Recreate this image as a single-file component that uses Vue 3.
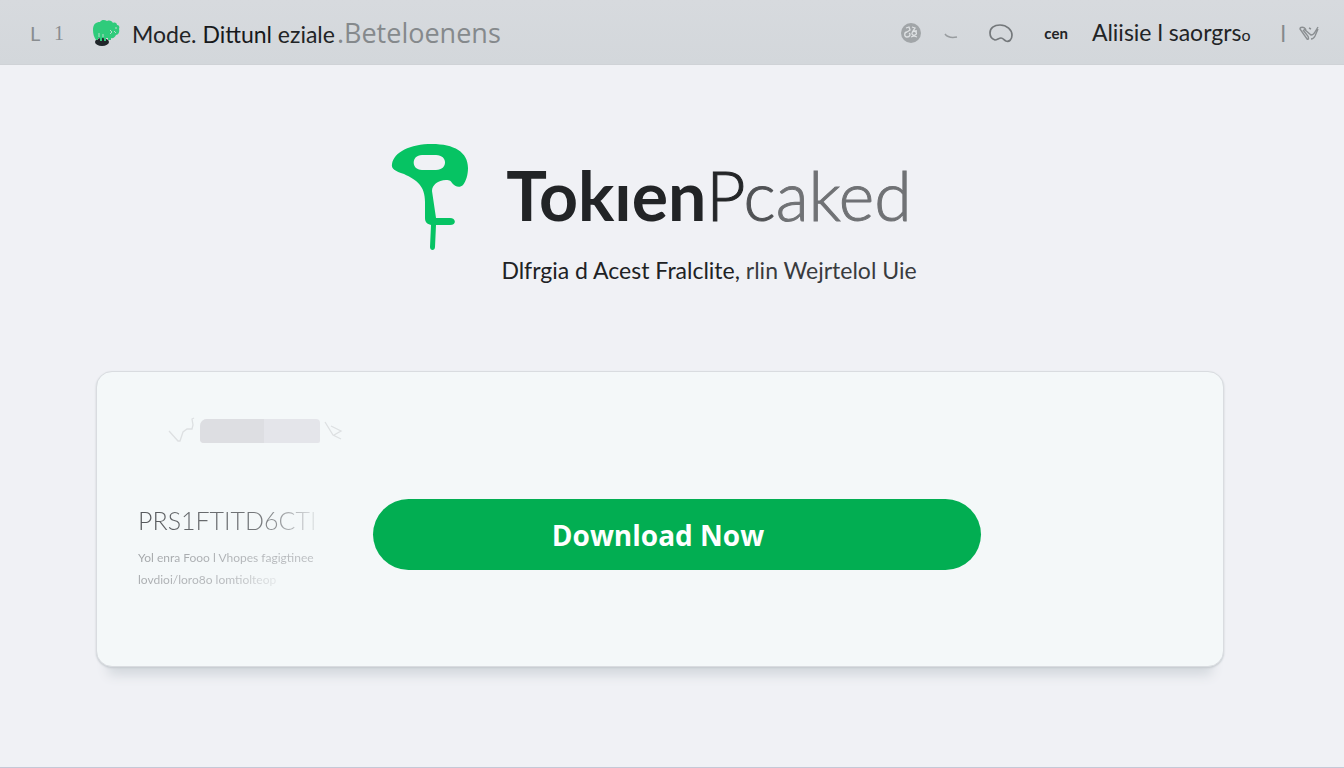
<script setup>
</script>

<template>
  <div class="page">
    <header class="topbar">
      <nav class="primary" aria-label="Primary">
        <a class="mark" href="#">L</a>
        <a class="mark serif" href="#">1</a>
        <a class="brand" href="#">
          <svg class="brand-icon" viewBox="0 0 30 30" aria-hidden="true">
            <ellipse cx="10" cy="24" rx="7" ry="4" fill="#20262a" />
            <path d="M1 12C1 6 4 4 8 4c2-3 5-2 7-1 3-1 5 0 6 2 2-1 4 0 4 2 2 0 3 2 2 4 1 3-1 6-3 6-1 2-3 4-5 3v2h-3v-2h-2v3h-2v-3h-2v3H8v-3H6v2H4c-2-3-3-6-3-10z" fill="#2fcb7b" />
            <path d="M18 12l2 2-2 2m4-3l2 2m-1-5h2M7 15v4m4-3v3" fill="none" stroke="#b8dccb" stroke-width="1" />
          </svg>
          <span class="brand-text">Mode. <span class="strong">Dittunl</span> eziale<span class="soft">.Beteloenens</span></span>
        </a>
      </nav>
      <nav class="secondary" aria-label="Account">
        <span class="tools">
          <button class="icon-button" type="button" aria-label="Status">
            <svg width="22" height="22" viewBox="0 0 22 22">
              <circle cx="11" cy="11" r="10" fill="#a1a5a8" />
              <path d="M6 6l3-1 1 3-3 2M7 10c-3 0-3 5 0 5s4-3 2-4M12 5l3 1-2 3 4 0M12 10c4-2 6 2 3 3s-4-2-2-3m-2 5l3-1 3 1" fill="none" stroke="#dfe2e4" stroke-width="1.3" />
            </svg>
          </button>
          <button class="icon-button" type="button" aria-label="Expand">
            <svg width="14" height="22" viewBox="0 0 14 22">
              <path d="M1 12c3 4 7 4 12 3" fill="none" stroke="#989c9f" stroke-width="1.5" />
            </svg>
          </button>
        </span>
        <button class="icon-button" type="button" aria-label="Messages">
          <svg width="26" height="22" viewBox="0 0 26 22">
            <path d="M7 18C4 17 2 14 2 11c0-5 4-8 10-8 7 0 12 5 12 10 0 5-3 7-6 6-2-1-3-3-5-3-2 0-4 2-6 2z" fill="none" stroke="#74787b" stroke-width="1.7" />
          </svg>
        </button>
        <span class="user">
          <a class="lang" href="#">cen</a>
          <a class="account" href="#">Aliisie l saorgrs<span class="tail">o</span></a>
        </span>
        <span class="more">
          <span class="divider">l</span>
          <button class="icon-button" type="button" aria-label="More">
            <svg width="22" height="22" viewBox="0 0 22 22">
              <path d="M8 8C6 4 2 5 2 7l7 10c2 1 2-2 0-4L5 8M6 7l7 6c2 0 3-1 4-3l3-5M13 17c2 0 3-1 4-3l3-7M11 6l2 1" fill="none" stroke="#8b8f92" stroke-width="1.4" />
            </svg>
          </button>
        </span>
      </nav>
    </header>

    <main>
      <section class="hero">
        <svg class="logo" viewBox="0 0 78 108" aria-hidden="true">
          <path fill="#06c363" fill-rule="evenodd" d="M1 21C3 9 19 1 41 1c22 0 36 8 36 24 0 7-2 13-5 17-3 3-8 2-11-2-1-2-2-3-6-3-8 0-14 5-14 11l4 27h14c6 0 7 7 0 7H45l-1 22c0 4-5 4-5 0l1-22c-4-1-6-3-6-7V59C34 43 26 37 13 31 4 28 0 26 1 21zM31 12c-11 0-11 15 0 15h14c12 0 12-15 0-15z" />
        </svg>
        <div class="hero-copy">
          <h1>Tokıen<span class="thin"><span class="dark">P</span><span class="mid">c</span>aked</span></h1>
          <p><span class="ink">Dlfrgia d Acest Fralclite,</span> rlin Wejrtelol Uie</p>
        </div>
      </section>

      <section class="card">
        <div class="meter">
          <svg width="28" height="28" viewBox="0 0 28 28" aria-hidden="true">
            <path d="M1 14l9 10h2l3-9 4-3h5l1-4-1-6 2-1" fill="none" stroke="#dde0e2" stroke-width="1.3" />
          </svg>
          <div class="bar"><span></span></div>
          <svg width="20" height="28" viewBox="0 0 20 28" aria-hidden="true">
            <path d="M1 5l8 13 8 4M7 9l10 5-7 4" fill="none" stroke="#dde0e2" stroke-width="1.3" />
          </svg>
        </div>
        <div class="card-body">
          <div class="details">
            <h2>PRS1FTITD6CTI</h2>
            <p class="line">Yol enra Fooo l Vhopes fagigtinee</p>
            <p class="line faded">lovdioi/loro8o lomtiolteop</p>
          </div>
          <button class="download" type="button">Download Now</button>
        </div>
      </section>
    </main>
  </div>
</template>

<style>
body {
  margin: 0;
  background: #f0f1f5;
}
</style>

<style scoped>
.page {
  box-sizing: border-box;
  min-height: 100vh;
  border-bottom: 1px solid #c5c8d6;
  background: #f0f1f5;
  font-family: Lato, "Liberation Sans", sans-serif;
  color: #222426;
}

a {
  color: inherit;
  text-decoration: none;
}

button {
  border: 0;
  padding: 0;
  background: none;
  font-family: inherit;
}

svg {
  display: block;
}

.topbar {
  display: flex;
  justify-content: space-between;
  align-items: center;
  box-sizing: border-box;
  height: 65px;
  padding: 2px 24px 0 30px;
  background: linear-gradient(#d7dade, #d3d7db);
  border-bottom: 1px solid #cfd2d6;
  font-size: 23px;
  line-height: 32px;
  white-space: nowrap;
}

.primary,
.secondary,
.tools,
.user,
.more,
.brand {
  display: flex;
  align-items: center;
}

.mark {
  width: 24px;
  font-size: 20px;
  color: #898d90;
}

.serif {
  font-family: "Liberation Serif", serif;
}

.brand {
  gap: 10px;
  margin-left: 14px;
}

.brand-icon {
  width: 30px;
  height: 30px;
}

.brand-text {
  line-height: 28px;
}

.strong {
  color: #17191b;
}

.soft {
  margin-left: 2px;
  font-family: "Open Sans", sans-serif;
  font-size: 27px;
  color: #85898c;
}

.secondary {
  gap: 30px;
}

.tools {
  gap: 22px;
}

.user {
  gap: 24px;
}

.more {
  gap: 12px;
}

.lang {
  font-size: 15px;
  font-weight: 700;
}

.tail {
  font-size: 16px;
}

.divider {
  color: #85898c;
}

.hero {
  display: flex;
  justify-content: center;
  gap: 32px;
  padding-top: 78px;
  padding-right: 36px;
}

.logo {
  width: 78px;
  height: 108px;
}

.hero-copy {
  display: flex;
  flex-direction: column;
  align-items: center;
  padding-top: 12px;
}

h1 {
  margin: 0;
  font-size: 68px;
  line-height: 80px;
  font-weight: 700;
  white-space: nowrap;
}

.thin {
  font-weight: 300;
  color: #707275;
  -webkit-text-stroke: 1px currentColor;
}

.dark {
  color: #242628;
}

.mid {
  color: #505255;
}

.hero-copy p {
  margin: 19px 0 0;
  font-size: 23px;
  line-height: 32px;
  color: #393b3e;
  white-space: nowrap;
}

.ink {
  color: #202224;
}

.card {
  box-sizing: border-box;
  min-height: 296px;
  margin: 85px 120px 0 96px;
  padding: 45px 41px 40px;
  border: 1px solid #d9dce0;
  border-radius: 16px;
  background: #f4f8f9;
  box-shadow: 0 1px 2px #c5cacf, 0 20px 12px -12px #d3d8dd;
}

.meter {
  display: flex;
  align-items: center;
  gap: 4px;
  padding-left: 30px;
}

.bar {
  width: 120px;
  height: 24px;
  border-radius: 7px 4px 2px 4px;
  background: #e4e5ea;
  overflow: hidden;
}

.bar span {
  display: block;
  width: 64px;
  height: 24px;
  background: #dddee2;
}

.card-body {
  display: flex;
  align-items: flex-start;
  margin-top: 54px;
}

.details {
  width: 235px;
  padding-top: 4px;
  white-space: nowrap;
}

h2 {
  width: max-content;
  margin: 0 0 10px;
  font-size: 25px;
  line-height: 34px;
  font-weight: 300;
  color: transparent;
  background: linear-gradient(90deg, #55585b, #777a7d 70%, #e0e3e5);
  background-clip: text;
}

.line {
  width: max-content;
  margin: 0;
  font-size: 12px;
  line-height: 22px;
  color: transparent;
  background: linear-gradient(90deg, #a2a5a8, #bcbfc2);
  background-clip: text;
}

.faded {
  background: linear-gradient(90deg, #a8abae, #b8bbbe 70%, #e3e6e8);
  background-clip: text;
}

.download {
  flex: 0 1 608px;
  height: 71px;
  padding-right: 38px;
  border-radius: 36px;
  background: #02ae52;
  color: #fff;
  font-family: "Open Sans", sans-serif;
  font-size: 28px;
  font-weight: 700;
  cursor: pointer;
}
</style>
